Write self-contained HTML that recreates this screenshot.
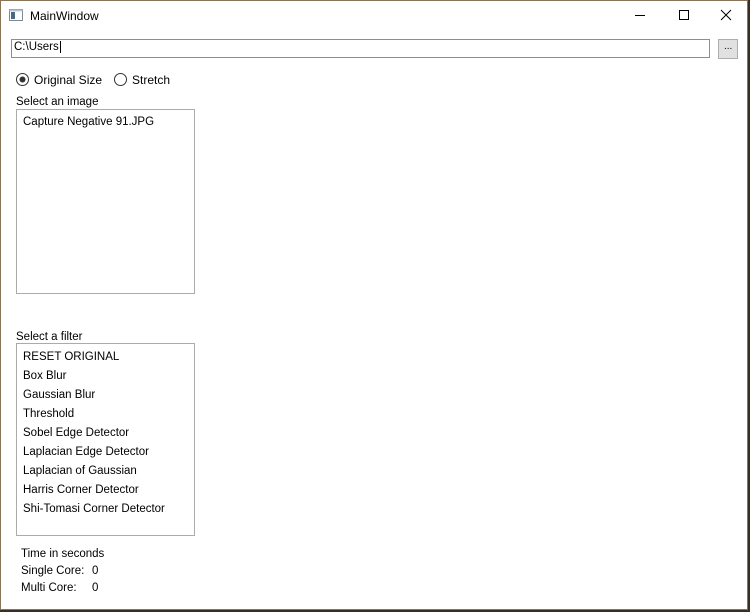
<!DOCTYPE html><html><head><style>
body{margin:0;width:750px;height:612px;background:#3a2e22;position:relative;overflow:hidden;font-family:"Liberation Sans",sans-serif;font-size:11.5px;color:#000}
.win{position:absolute;left:0;top:0;width:748px;height:610px;background:#fff;border:1px solid #8b7355;box-sizing:border-box}
.a{position:absolute;white-space:nowrap}
.box{position:absolute;border:1px solid #ababab;box-sizing:border-box}
</style></head><body><div class="win">
<svg class="a" style="left:8px;top:8px" width="15" height="13"><rect x="0.5" y="0.5" width="13" height="11" fill="#fff" stroke="#7a8a99"/><rect x="2" y="3" width="4" height="7" fill="#4b6a80"/><rect x="0.5" y="0.5" width="13" height="2" fill="#b8c8d8"/></svg>
<div class="a" style="left:29px;top:8px;font-size:12px">MainWindow</div>
<svg class="a" style="left:629px;top:7px" width="110" height="14"><line x1="5" y1="7.5" x2="15" y2="7.5" stroke="#000"/><rect x="49.5" y="2.5" width="9" height="9" fill="none" stroke="#000"/><path d="M91 2L101 12M101 2L91 12" stroke="#000"/></svg>
<div class="box" style="left:10px;top:38px;width:699px;height:19px;border-color:#5a9ad8"></div>
<div class="a" style="left:13px;top:40px">C:\Users<span style="border-left:1px solid #000;margin-left:1px"></span></div>
<div class="box" style="left:717px;top:38px;width:20px;height:20px;background:#e1e1e1;border-color:#adadad"></div>
<div class="a" style="left:723px;top:40px;font-size:10px">...</div>
<svg class="a" style="left:15px;top:72px" width="14" height="14"><circle cx="6.5" cy="6.5" r="6" fill="#fff" stroke="#333"/><circle cx="6.5" cy="6.5" r="3" fill="#333"/></svg>
<div class="a" style="left:33px;top:72px;font-size:12px">Original Size</div>
<svg class="a" style="left:113px;top:72px" width="14" height="14"><circle cx="6.5" cy="6.5" r="6" fill="#fff" stroke="#333"/></svg>
<div class="a" style="left:131px;top:72px;font-size:12px">Stretch</div>
<div class="a" style="left:15px;top:95px">Select an image</div>
<div class="box" style="left:15px;top:108px;width:179px;height:185px"></div>
<div class="a" style="left:22px;top:115px">Capture Negative 91.JPG</div>
<div class="a" style="left:15px;top:330px">Select a filter</div>
<div class="box" style="left:15px;top:342px;width:179px;height:193px"></div>
<div class="a" style="left:22px;top:347px;line-height:19px">RESET ORIGINAL<br>Box Blur<br>Gaussian Blur<br>Threshold<br>Sobel Edge Detector<br>Laplacian Edge Detector<br>Laplacian of Gaussian<br>Harris Corner Detector<br>Shi-Tomasi Corner Detector</div>
<div class="a" style="left:20px;top:545px;line-height:17px">Time in seconds<br>Single Core:<br>Multi Core:</div>
<div class="a" style="left:91px;top:562px;line-height:17px">0<br>0</div>
</div></body></html>
